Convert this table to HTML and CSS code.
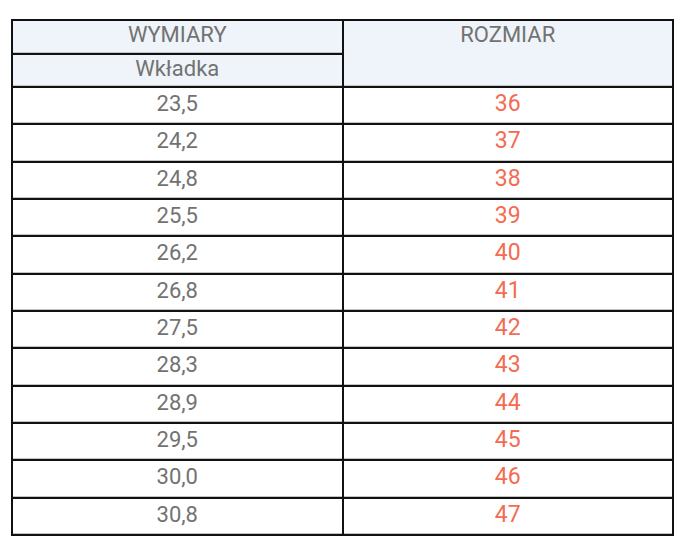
FILE: index.html
```html
<!DOCTYPE html>
<html lang="pl">
<head>
<meta charset="utf-8">
<link rel="stylesheet" href="styles.css">
</head>
<body>
<table class="sizes">
  <thead>
    <tr class="head-row head-row--top">
      <th class="cell cell--head">WYMIARY</th>
      <th class="cell cell--head" rowspan="2">ROZMIAR</th>
    </tr>
    <tr class="head-row">
      <th class="cell cell--head">Wkładka</th>
    </tr>
  </thead>
  <tbody>
    <tr class="row"><td class="cell">23,5</td><td class="cell cell--size">36</td></tr>
    <tr class="row"><td class="cell">24,2</td><td class="cell cell--size">37</td></tr>
    <tr class="row"><td class="cell">24,8</td><td class="cell cell--size">38</td></tr>
    <tr class="row"><td class="cell">25,5</td><td class="cell cell--size">39</td></tr>
    <tr class="row"><td class="cell">26,2</td><td class="cell cell--size">40</td></tr>
    <tr class="row"><td class="cell">26,8</td><td class="cell cell--size">41</td></tr>
    <tr class="row"><td class="cell">27,5</td><td class="cell cell--size">42</td></tr>
    <tr class="row"><td class="cell">28,3</td><td class="cell cell--size">43</td></tr>
    <tr class="row"><td class="cell">28,9</td><td class="cell cell--size">44</td></tr>
    <tr class="row"><td class="cell">29,5</td><td class="cell cell--size">45</td></tr>
    <tr class="row"><td class="cell">30,0</td><td class="cell cell--size">46</td></tr>
    <tr class="row"><td class="cell">30,8</td><td class="cell cell--size">47</td></tr>
  </tbody>
</table>
</body>
</html>
```
FILE: styles.css
```css
html, body {
  margin: 0;
  padding: 0;
  background: #ffffff;
}
body {
  padding: 19px 0 0 11px;
  font-family: Roboto, "Liberation Sans", sans-serif;
}
.sizes {
  border-collapse: collapse;
  width: 663px;
  table-layout: fixed;
  border: 2px solid #111111;
}
.cell {
  border: 2px solid #111111;
  box-shadow: inset 0 -1px 0 #c4c4c4;
  padding: 2px 0 0;
  vertical-align: top;
  text-align: center;
  font-size: 22px;
  line-height: 24px;
  font-weight: 400;
  color: #727272;
  width: 50%;
}
.cell--head {
  background: #eef4f9;
  height: 29.5px;
}
.row .cell {
  height: 31.33px;
  padding-top: 4px;
}
.cell--size {
  color: #f46b52;
  font-size: 23px;
}
```
